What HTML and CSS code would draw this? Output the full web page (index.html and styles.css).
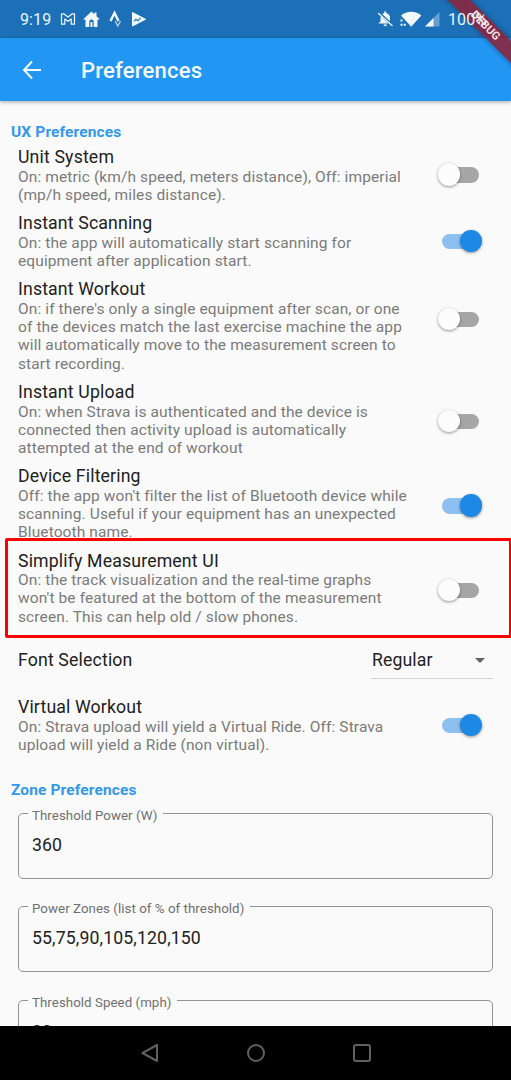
FILE: index.html
```html
<!DOCTYPE html>
<html lang="en">
<head>
<meta charset="utf-8">
<title>Preferences</title>
<link rel="stylesheet" href="styles.css">
</head>
<body>
<div class="screen">
  <header class="status">
    <span class="clock">9:19</span>
    <svg class="status-left" width="88" height="18" viewBox="0 0 88 18" fill="none" stroke="#f1f8fd">
      <path d="M1.500 14.200V3.800h2.200L8 7l4.300-3.200h2.200v10.400h-3.300V9L8 11.300 4.800 9v5.200z" stroke-width="1.200" stroke-linejoin="round"/>
      <path d="M23 9.500L31.500 1.500 34.500 4.300V2.500h2v3.700L40 9.500h-2.500V17h-3.800v-5.500c0-2.800-4.400-2.800-4.400 0V17h-3.800V9.500zM30.500 17v-5h2v5z" fill="#f1f8fd" stroke="none"/>
      <path d="M50.500 11l4-8 4 8" stroke-width="2.400"/>
      <path d="M55.200 11l2.600 5 2.600-5" stroke-width="1.400" opacity=".7"/>
      <path d="M72.500 2.500v13.500L85.500 9.300z" fill="#f1f8fd" stroke="#f1f8fd" stroke-linejoin="round"/>
      <path d="M74 11.300l2-2 2 1.500 2.500-3" stroke="#1c70b7" stroke-width="1.100"/>
    </svg>
    <svg class="status-right" width="64" height="18" viewBox="0 0 64 18" fill="#f1f8fd">
      <path d="M1.500 13.500l2-2V8.200c0-3 1.400-4.600 3.700-5.200V1.500h2V3c2.400.6 3.800 2.200 3.800 5.200v3.300l2 2zM6.500 14.500h3.500c0 2.300-3.500 2.300-3.500 0z"/>
      <path d="M1 2l15 14" stroke="#1c70b7" stroke-width="2.800"/>
      <path d="M1 3l14.500 13" stroke="#f1f8fd" stroke-width="1.300"/>
      <path d="M24 5.500C30 .5 38.500.5 44.300 5.500L34.200 16.800z"/>
      <path d="M23.500 9.500h2v2h-2zM23.500 13.700h2v2h-2zM26.700 13.700h2v2h-2z"/>
      <path d="M48 16.500L62.500 2v14.500z" opacity=".35"/>
      <path d="M48 16.500l8.500-8.500v8.500z"/>
    </svg>
    <span class="battery">100%</span>
  </header>
  <div class="appbar">
    <svg width="20" height="20" viewBox="0 0 20 20" fill="none" stroke="#f4faff" stroke-width="2"><path d="M10 1.500L2 10l8 8.500M2 10h17"/></svg>
    <h1>Preferences</h1>
  </div>
  <main class="content">
    <h2 class="section">UX Preferences</h2>
    <section class="row">
      <div class="copy"><h3>Unit System</h3><p>On: metric (km/h speed, meters distance), Off: imperial<br>(mp/h speed, miles distance).</p></div>
      <i class="switch"></i>
    </section>
    <section class="row">
      <div class="copy"><h3>Instant Scanning</h3><p>On: the app will automatically start scanning for<br>equipment after application start.</p></div>
      <i class="switch on"></i>
    </section>
    <section class="row tall">
      <div class="copy"><h3>Instant Workout</h3><p>On: if there's only a single equipment after scan, or one<br>of the devices match the last exercise machine the app<br>will automatically move to the measurement screen to<br>start recording.</p></div>
      <i class="switch"></i>
    </section>
    <section class="row medium">
      <div class="copy"><h3>Instant Upload</h3><p>On: when Strava is authenticated and the device is<br>connected then activity upload is automatically<br>attempted at the end of workout</p></div>
      <i class="switch"></i>
    </section>
    <section class="row medium">
      <div class="copy"><h3>Device Filtering</h3><p>Off: the app won't filter the list of Bluetooth device while<br>scanning. Useful if your equipment has an unexpected<br>Bluetooth name.</p></div>
      <i class="switch on"></i>
    </section>
    <section class="row medium">
      <div class="copy"><h3>Simplify Measurement UI</h3><p>On: the track visualization and the real-time graphs<br>won't be featured at the bottom of the measurement<br>screen. This can help old / slow phones.</p></div>
      <i class="switch"></i>
    </section>
    <section class="font-row">
      <h3>Font Selection</h3>
      <div class="select"><span>Regular</span><i class="caret"></i></div>
    </section>
    <section class="row">
      <div class="copy"><h3>Virtual Workout</h3><p>On: Strava upload will yield a Virtual Ride. Off: Strava<br>upload will yield a Ride (non virtual).</p></div>
      <i class="switch on"></i>
    </section>
    <h2 class="section zone">Zone Preferences</h2>
    <fieldset class="field"><legend><span>Threshold Power (W)</span></legend><div>360</div></fieldset>
    <fieldset class="field"><legend><span>Power Zones (list of % of threshold)</span></legend><div>55,75,90,105,120,150</div></fieldset>
    <fieldset class="field"><legend><span>Threshold Speed (mph)</span></legend><div>20</div></fieldset>
  </main>
  <nav class="navbar">
    <svg width="20" height="20" viewBox="0 0 20 20"><path d="M2.500 10L17 2v16z"/></svg>
    <svg width="20" height="20" viewBox="0 0 20 20"><circle cx="10" cy="10" r="8"/></svg>
    <svg width="20" height="20" viewBox="0 0 20 20"><rect x="2" y="2" width="16" height="16" rx="2"/></svg>
  </nav>
  <div class="highlight"></div>
  <div class="debug">DEBUG</div>
</div>
</body>
</html>
```
FILE: styles.css
```css
* { box-sizing: border-box; }
body { margin: 0; background: #fafafa; font-family: Roboto, "Liberation Sans", sans-serif; }
.screen { position: relative; width: 511px; height: 1080px; overflow: hidden; display: flex; flex-direction: column; color: #212121; }
h1, h2, h3, p { margin: 0; font-weight: 400; }
.status { flex: none; height: 38px; background: #1c70b7; display: flex; align-items: center; padding-left: 20px; color: #eaf5fc; font-size: 16px; letter-spacing: .1px; }
.clock { width: 40px; }
.status-right { margin-left: 229px; }
.battery { margin-left: 7px; position: relative; z-index: 2; }
.appbar { flex: none; height: 63px; background: #2196f3; display: flex; align-items: center; padding-left: 22px; gap: 39px; color: #f4faff; box-shadow: 0 1px 4px rgba(0,0,0,.35); position: relative; }
h1 { font-size: 22.100px; font-weight: 500; letter-spacing: .17px; }
.content { flex: 1; min-height: 0; overflow: hidden; padding: 22.300px 18px 0; }
.section { margin-left: -7px; height: 23.600px; line-height: 19px; font-size: 15.500px; letter-spacing: .12px; font-weight: 700; color: #3498e8; }
.row { display: flex; justify-content: space-between; align-items: center; padding-right: 14.500px; margin-bottom: 9.100px; }
h3 { font-size: 17.700px; line-height: 20.800px; letter-spacing: .15px; }
p { font-size: 15.500px; line-height: 18.150px; letter-spacing: .11px; color: #7b7b7b; white-space: nowrap; }
.switch { flex: none; position: relative; width: 45px; height: 24px; }
.switch::before { content: ""; position: absolute; left: 8px; top: 4px; width: 37px; height: 15.500px; border-radius: 8px; background: #a6a6a6; }
.switch::after { content: ""; position: absolute; left: 4px; top: 0; width: 22.500px; height: 22.500px; border-radius: 50%; background: #fcfcfc; box-shadow: 0 1px 3px rgba(0,0,0,.42); }
.switch.on::before { background: #8dc0f0; }
.switch.on::after { left: 26px; background: #1e88e5; }
.tall .switch { margin-bottom: 13px; }
.medium .switch { margin-top: 5px; }
.font-row { display: flex; justify-content: space-between; align-items: center; height: 52px; margin: 2.200px 0 10.200px; }
.select { display: flex; justify-content: space-between; align-items: center; width: 122px; height: 36px; border-bottom: 1px solid #d4d4d4; font-size: 17.700px; letter-spacing: .1px; padding: 0 8px 0 1px; }
.caret { border: 5.500px solid transparent; border-top-color: #616161; border-bottom: 0; }
.zone { margin-top: 26.800px; }
.field { height: 73.200px; margin: 1.100px 0 20.300px; padding: 0 13px 0 9px; border: 1px solid #929292; border-radius: 5px; min-width: 0; }
.field legend { padding: 0 6px 0 4px; height: 15px; line-height: 15px; font-size: 13.300px; letter-spacing: .05px; color: #707070; }
.field legend span { display: block; padding-top: 2px; }
.field div { padding-left: 4px; margin-top: 14px; font-size: 17.700px; line-height: 21px; letter-spacing: .12px; }
.navbar { flex: none; height: 54px; background: #000; display: flex; align-items: center; justify-content: center; gap: 86px; padding-left: 0; }
.navbar svg { fill: none; stroke: #606060; stroke-width: 2; stroke-linejoin: round; }
.highlight { position: absolute; left: 5px; top: 538px; width: 507px; height: 100px; border: 3px solid #fe0000; border-radius: 2px; }
.debug { position: absolute; left: 435px; top: 18px; width: 100px; height: 16px; line-height: 16px; text-align: center; transform: rotate(45deg); background: rgba(136,38,62,.9); color: #f3dfe4; font-size: 11.300px; font-weight: 700; box-shadow: 0 0 5px rgba(0,0,0,.4); }
```
